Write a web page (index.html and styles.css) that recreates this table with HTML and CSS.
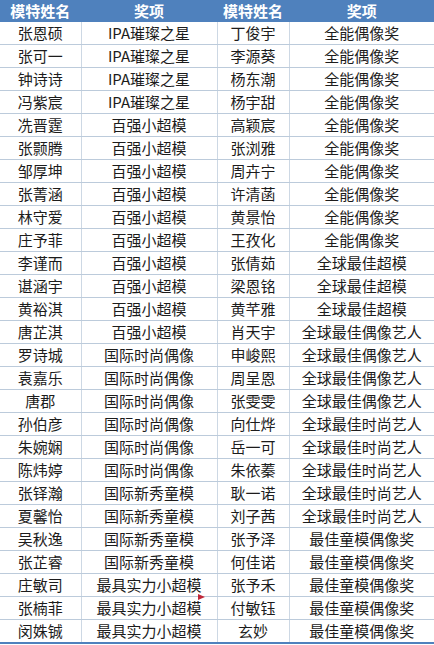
FILE: index.html
```html
<!DOCTYPE html>
<html lang="zh-CN">
<head>
<meta charset="utf-8">
<title>获奖名单</title>
<link rel="stylesheet" href="styles.css">
</head>
<body>
<div class="sheet">
<table class="awards">
<colgroup>
<col class="c-name"><col class="c-award"><col class="c-name2"><col class="c-award2">
</colgroup>
<thead>
<tr><th>模特姓名</th><th>奖项</th><th>模特姓名</th><th>奖项</th></tr>
</thead>
<tbody>
<tr><td>张恩硕</td><td>IPA璀璨之星</td><td>丁俊宇</td><td>全能偶像奖</td></tr>
<tr><td>张可一</td><td>IPA璀璨之星</td><td>李源葵</td><td>全能偶像奖</td></tr>
<tr><td>钟诗诗</td><td>IPA璀璨之星</td><td>杨东潮</td><td>全能偶像奖</td></tr>
<tr><td>冯紫宸</td><td>IPA璀璨之星</td><td>杨宇甜</td><td>全能偶像奖</td></tr>
<tr><td>冼晋霆</td><td>百强小超模</td><td>高颖宸</td><td>全能偶像奖</td></tr>
<tr><td>张颢腾</td><td>百强小超模</td><td>张浏雅</td><td>全能偶像奖</td></tr>
<tr><td>邹厚坤</td><td>百强小超模</td><td>周卉宁</td><td>全能偶像奖</td></tr>
<tr><td>张菁涵</td><td>百强小超模</td><td>许清菡</td><td>全能偶像奖</td></tr>
<tr><td>林守爱</td><td>百强小超模</td><td>黄景怡</td><td>全能偶像奖</td></tr>
<tr><td>庄予菲</td><td>百强小超模</td><td>王孜化</td><td>全能偶像奖</td></tr>
<tr><td>李谨而</td><td>百强小超模</td><td>张倩茹</td><td>全球最佳超模</td></tr>
<tr><td>谌涵宇</td><td>百强小超模</td><td>梁恩铭</td><td>全球最佳超模</td></tr>
<tr><td>黄裕淇</td><td>百强小超模</td><td>黄芊雅</td><td>全球最佳超模</td></tr>
<tr><td>唐芷淇</td><td>百强小超模</td><td>肖天宇</td><td>全球最佳偶像艺人</td></tr>
<tr><td>罗诗城</td><td>国际时尚偶像</td><td>申峻熙</td><td>全球最佳偶像艺人</td></tr>
<tr><td>袁嘉乐</td><td>国际时尚偶像</td><td>周呈恩</td><td>全球最佳偶像艺人</td></tr>
<tr><td>唐郡</td><td>国际时尚偶像</td><td>张雯雯</td><td>全球最佳偶像艺人</td></tr>
<tr><td>孙伯彦</td><td>国际时尚偶像</td><td>向仕烨</td><td>全球最佳时尚艺人</td></tr>
<tr><td>朱婉娴</td><td>国际时尚偶像</td><td>岳一可</td><td>全球最佳时尚艺人</td></tr>
<tr><td>陈炜婷</td><td>国际时尚偶像</td><td>朱依蓁</td><td>全球最佳时尚艺人</td></tr>
<tr><td>张铎瀚</td><td>国际新秀童模</td><td>耿一诺</td><td>全球最佳时尚艺人</td></tr>
<tr><td>夏馨怡</td><td>国际新秀童模</td><td>刘子茜</td><td>全球最佳时尚艺人</td></tr>
<tr><td>吴秋逸</td><td>国际新秀童模</td><td>张予泽</td><td>最佳童模偶像奖</td></tr>
<tr><td>张芷睿</td><td>国际新秀童模</td><td>何佳诺</td><td>最佳童模偶像奖</td></tr>
<tr><td>庄敏司</td><td>最具实力小超模</td><td>张予禾</td><td>最佳童模偶像奖</td></tr>
<tr><td>张楠菲</td><td>最具实力小超模</td><td>付敏钰</td><td>最佳童模偶像奖</td></tr>
<tr><td>闵姝铖</td><td>最具实力小超模</td><td>玄妙</td><td>最佳童模偶像奖</td></tr>
</tbody>
</table>
<span class="cursor"></span>
</div>
</body>
</html>
```
FILE: styles.css
```css
html, body {
  margin: 0;
  padding: 0;
  background: #ffffff;
}
.sheet {
  position: relative;
  width: 434px;
  height: 645px;
  overflow: hidden;
}
.awards {
  border-collapse: collapse;
  table-layout: fixed;
  width: 434px;
  font-family: "Microsoft YaHei", "Noto Sans CJK SC", "Noto Sans", sans-serif;
  font-size: 15px;
  color: #1c1c1c;
  border-bottom: 2px solid #4f81bd;
}
.c-name { width: 81px; }
.c-award { width: 136px; }
.c-name2 { width: 72px; }
.c-award2 { width: 145px; }
.awards th {
  height: 22px;
  padding: 0;
  background: #4f81bd;
  color: #ffffff;
  font-weight: bold;
  line-height: 22px;
  text-align: center;
  border-right: 1px solid #4f81bd;
}
.awards td {
  height: 22px;
  padding: 0;
  line-height: 22px;
  text-align: center;
  border-bottom: 1px solid #bccbdb;
  border-right: 1px solid #cdd8e4;
  white-space: nowrap;
}
.awards td:last-child,
.awards th:last-child {
  border-right: none;
}
.awards tbody tr:last-child td {
  border-bottom: none;
}
.cursor {
  position: absolute;
  left: 198px;
  top: 594px;
  width: 0;
  height: 0;
  border-top: 3px solid transparent;
  border-bottom: 3px solid transparent;
  border-left: 7px solid #c0283a;
}
```
